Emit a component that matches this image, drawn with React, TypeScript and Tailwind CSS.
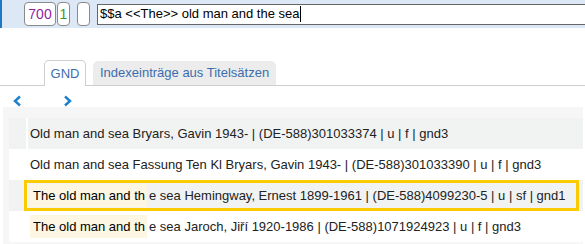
import React from 'react'

type Row = { hit?: string; rest: string; selected?: boolean }

const rows: Row[] = [
  { rest: 'Old man and sea Bryars, Gavin 1943- | (DE-588)301033374 | u | f | gnd3' },
  { rest: 'Old man and sea Fassung Ten Kl Bryars, Gavin 1943- | (DE-588)301033390 | u | f | gnd3' },
  { hit: 'The old man and th', rest: 'e sea Hemingway, Ernest 1899-1961 | (DE-588)4099230-5 | u | sf | gnd1', selected: true },
  { hit: 'The old man and th', rest: 'e sea Jaroch, Jiří 1920-1986 | (DE-588)1071924923 | u | f | gnd3' },
]

function Chevron({ dir }: { dir: 'left' | 'right' }) {
  return (
    <svg width="9" height="12" viewBox="0 0 9 12" className="text-[#1b7fcc]">
      <polyline
        points={dir === 'left' ? '7,1.5 2,6 7,10.5' : '2,1.5 7,6 2,10.5'}
        fill="none"
        stroke="currentColor"
        strokeWidth="2.4"
      />
    </svg>
  )
}

export default function App() {
  return (
    <div className="w-[585px] h-[244px] overflow-hidden bg-white text-[13px] font-['Liberation_Sans',Arial,sans-serif]">
      {/* field line */}
      <div className="h-[28px] bg-[#dde8f6] border-l-2 border-[#1f78c1] flex items-center pl-[22px]">
        <div className="h-[24px] w-[32px] rounded-[4px] border border-[#8a8a8a] bg-white flex items-center justify-center text-[14px] text-[#8e1fa0]">
          700
        </div>
        <div className="ml-px h-[24px] w-[13px] rounded-[4px] border border-[#8a8a8a] bg-white flex items-center justify-center text-[14px] text-[#3c9a1e]">
          1
        </div>
        <div className="ml-[7px] h-[24px] w-[13px] rounded-[4px] border border-[#8a8a8a] bg-white" />
        <div className="ml-[7px] flex-1 h-[21px] bg-white border-y border-l border-[#666] flex items-center pl-[2px] text-black whitespace-nowrap">
          <span>$$a &lt;&lt;The&gt;&gt; old man and the sea</span>
          <span className="w-px h-[16px] bg-black" />
        </div>
      </div>

      {/* tabs */}
      <div className="mt-[32px] h-[26px] border-b border-[#cfcfcf] flex items-end pl-[44px] gap-[7px]">
        <div className="h-[26px] w-[42px] justify-center rounded-t-[5px] border border-b-0 border-[#cfcfcf] bg-white text-[#3d6cad] flex items-center -mb-px">
          GND
        </div>
        <div className="h-[24px] px-[7px] rounded-t-[5px] bg-[#ececec] text-[#3d6cad] flex items-center">
          Indexeinträge aus Titelsätzen
        </div>
      </div>

      {/* pager */}
      <div className="h-[21px] flex items-end pl-[13px] gap-[41px]">
        <Chevron dir="left" />
        <Chevron dir="right" />
      </div>

      {/* result list */}
      <div className="ml-[3px] mr-[2px] bg-[#f6f6f6] pt-[11px] pl-[6px] h-[139px]">
        {rows.map((r, i) => (
          <div
            key={i}
            className={`relative h-[31px] flex ${i % 2 === 0 ? 'bg-[#f1f3f3]' : 'bg-white'}`}
          >
            <div className="w-[17px] shrink-0" />
            <div className="w-[2px] shrink-0 bg-white" />
            <div className="flex-1 flex items-center pl-[2px] whitespace-nowrap text-[#222]">
              {r.hit && (
                <span className="bg-[#fcf6e2] text-black pl-[3px] pr-[2px] mr-[2px] h-[23px] flex items-center">
                  {r.hit}
                </span>
              )}
              <span>{r.rest}</span>
            </div>
            {r.selected && (
              <div className="absolute left-[15px] right-[4px] top-0 bottom-0 border-[3px] border-[#fbcb00]" />
            )}
          </div>
        ))}
      </div>
    </div>
  )
}
